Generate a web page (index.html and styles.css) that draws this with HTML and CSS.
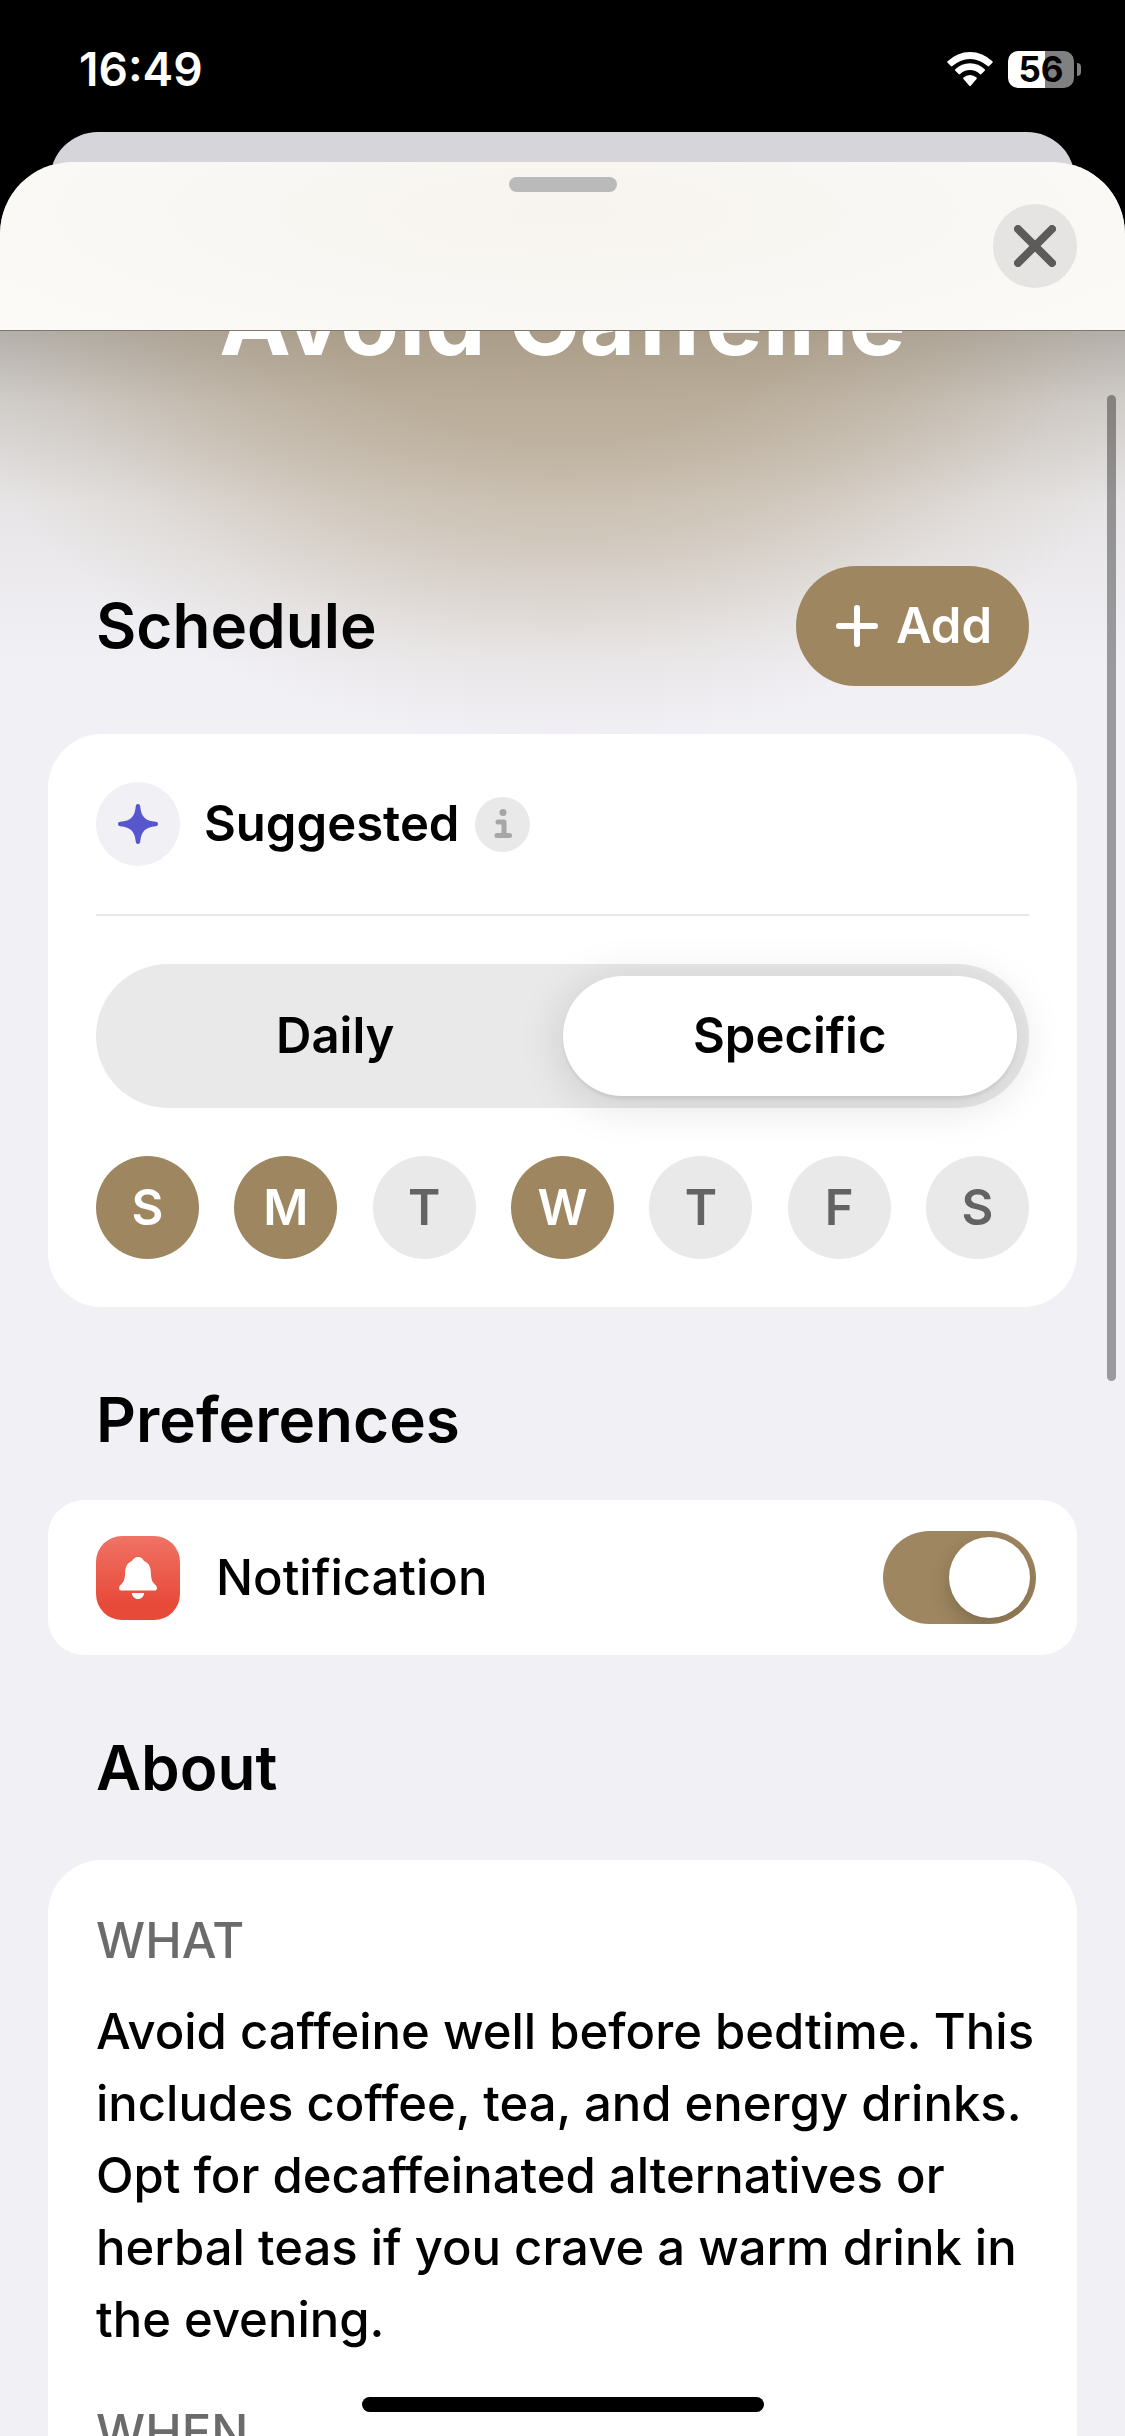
FILE: index.html
```
<!DOCTYPE html>
<html lang="en">
<head>
    <meta charset="UTF-8">
    <meta name="viewport" content="width=device-width, initial-scale=1">
    <title>Avoid Caffeine</title>
    <link rel="stylesheet" href="styles.css">
</head>
<body>

<div class="status-bar">
    <span class="time">16:49</span>
    <div class="status-icons">
        <svg class="wifi" viewBox="0 0 46 36" aria-hidden="true">
            <path d="M.6 10.2a32 32 0 0 1 44.8 0c.5.5.5 1 0 1.5l-3.3 3.4c-.5.5-1 .5-1.5 0a25.5 25.5 0 0 0-35.2 0c-.5.5-1 .5-1.5 0L.6 11.7c-.5-.5-.5-1 0-1.5z"/>
            <path d="M8.3 18.2a21 21 0 0 1 29.4 0c.5.5.5 1 0 1.5l-3.3 3.3c-.5.5-1 .5-1.5 0a14.5 14.5 0 0 0-19.8 0c-.5.5-1 .5-1.5 0l-3.3-3.3c-.5-.5-.5-1 0-1.5z"/>
            <path d="M16.5 26.5a9.5 9.5 0 0 1 13 0c.5.5.5 1 0 1.5l-5.700 6.800c-.5.5-1 .5-1.5 0L16.500 28c-.5-.5-.5-1 0-1.5z"/>
        </svg>
        <div class="battery">
            <span class="battery-level">56</span>
            <span class="battery-tip"></span>
        </div>
    </div>
</div>

<div class="back-card"></div>

<main class="sheet">
    <header class="sheet-header">
        <span class="grabber"></span>
        <button class="close" type="button" aria-label="Close">
            <svg viewBox="0 0 42 42" aria-hidden="true"><path d="M4 4l34 34M38 4L4 38"/></svg>
        </button>
    </header>

    <div class="scroll">
        <h1>Avoid Caffeine</h1>

        <div class="section-head">
            <h2>Schedule</h2>
            <button class="add" type="button">
                <svg viewBox="0 0 42 42" aria-hidden="true"><path d="M21 3v36M3 21h36"/></svg>
                Add
            </button>
        </div>

        <section class="card schedule">
            <div class="suggested">
                <span class="sparkle">
                    <svg viewBox="0 0 40 40" aria-hidden="true"><path d="M20 0c1.3 0 2 .8 2.2 2.2C23.2 12.5 27 16.800 37.800 17.800c1.400.2 2.200.9 2.200 2.200s-.8 2-2.200 2.200C27 23.200 23.200 27.500 22.200 37.800 22 39.200 21.300 40 20 40s-2-.8-2.200-2.200C16.800 27.500 13 23.200 2.200 22.200.8 22 0 21.300 0 20s.8-2 2.200-2.200C13 16.800 16.800 12.500 17.800 2.200 18 .8 18.700 0 20 0z"/></svg>
                </span>
                <span class="label">Suggested</span>
                <button class="info" type="button" aria-label="Info">
                    <svg viewBox="0 0 18 30" aria-hidden="true"><circle cx="9" cy="3.5" r="3.5"/><path d="M4 13h6v13M3 26.500h12.500"/></svg>
                </button>
            </div>

            <div class="segment">
                <label><input type="radio" name="repeat" value="daily"><span>Daily</span></label>
                <label><input type="radio" name="repeat" value="specific" checked><span>Specific</span></label>
            </div>

            <div class="days">
                <label><input type="checkbox" name="sun" checked><span>S</span></label>
                <label><input type="checkbox" name="mon" checked><span>M</span></label>
                <label><input type="checkbox" name="tue"><span>T</span></label>
                <label><input type="checkbox" name="wed" checked><span>W</span></label>
                <label><input type="checkbox" name="thu"><span>T</span></label>
                <label><input type="checkbox" name="fri"><span>F</span></label>
                <label><input type="checkbox" name="sat"><span>S</span></label>
            </div>
        </section>

        <div class="section-head">
            <h2>Preferences</h2>
        </div>

        <section class="card preference">
            <span class="bell">
                <svg viewBox="0 0 38 42" aria-hidden="true"><path d="M19 0c3 0 5 1.7 6 4 4.5 1.800 6.500 5.500 6.800 10.500.3 6.500.7 9.500 3.700 12.500 1.500 1.500 2.500 2.700 2.500 4.200 0 1.500-1.200 2.300-2.800 2.300H2.800C1.200 33.500 0 32.700 0 31.200c0-1.500 1-2.700 2.500-4.200 3-3 3.400-6 3.700-12.500C6.500 9.500 8.500 5.800 13 4c1-2.300 3-4 6-4zM12.800 36h12.400c-.4 3.500-2.900 6-6.200 6s-5.800-2.500-6.200-6z"/></svg>
            </span>
            <label for="notification">Notification</label>
            <input class="switch" type="checkbox" id="notification" checked>
        </section>

        <div class="section-head">
            <h2>About</h2>
        </div>

        <section class="card about">
            <h3>WHAT</h3>
            <p>Avoid caffeine well before bedtime. This includes coffee, tea, and energy drinks. Opt for decaffeinated alternatives or herbal teas if you crave a warm drink in the evening.</p>
            <h3>WHEN</h3>
        </section>
    </div>

    <span class="scrollbar"></span>
    <span class="home-indicator"></span>
</main>

</body>
</html>
```

FILE: styles.css
```
* {
    box-sizing: border-box;
}
body {
    margin: 0;
    height: 100vh;
    display: flex;
    flex-direction: column;
    overflow: hidden;
    background-color: #000;
    color: #000;
    font-family: Inter, "Liberation Sans", sans-serif;
    font-size: 49px;
    line-height: 72px;
}
h1, h2, h3, p {
    margin: 0;
}
svg {
    display: block;
}
button {
    border: none;
    padding: 0;
    font: inherit;
    display: flex;
    align-items: center;
    justify-content: center;
}

/* status bar */
.status-bar {
    height: 132px;
    padding: 6px 44px 0 79px;
    display: flex;
    align-items: center;
    justify-content: space-between;
    flex-shrink: 0;
    color: #fff;
}
.time {
    font-size: 46px;
    font-weight: 600;
}
.status-icons {
    display: flex;
    align-items: center;
    gap: 15px;
}
.wifi {
    width: 46px;
    height: 36px;
    fill: #fff;
}
.battery {
    display: flex;
    align-items: center;
    gap: 3px;
}
.battery-level {
    width: 66px;
    height: 37px;
    border-radius: 10px;
    background: linear-gradient(90deg, #fff 56%, #808080 56%);
    color: #000;
    font-size: 35px;
    font-weight: 700;
    line-height: 37px;
    text-align: center;
}
.battery-tip {
    width: 4px;
    height: 13px;
    border-radius: 0 4px 4px 0;
    background-color: #808080;
}

/* sheet */
.back-card {
    height: 102px;
    margin: 0 50px -72px;
    border-radius: 48px 48px 0 0;
    background-color: #d6d5da;
    flex-shrink: 0;
}
.sheet {
    position: relative;
    flex: 1;
    min-height: 0;
    overflow: hidden;
    border-radius: 72px 72px 0 0;
    background-color: #f1f0f5;
}
.sheet-header {
    position: absolute;
    z-index: 1;
    top: 0;
    left: 0;
    right: 0;
    height: 169px;
    padding: 0 48px;
    border-bottom: 1px solid #7d776c;
    background: radial-gradient(ellipse 60% 100% at 50% 30%, #f7f4ef, #fbfaf7);
    display: flex;
    align-items: center;
    justify-content: flex-end;
}
.grabber {
    position: absolute;
    top: 15px;
    left: calc(50% - 54px);
    width: 108px;
    height: 15px;
    border-radius: 8px;
    background-color: #bababa;
}
.close {
    width: 84px;
    height: 84px;
    border-radius: 50%;
    background-color: #e5e4e2;
}
.close svg {
    width: 42px;
    height: 42px;
    fill: none;
    stroke: #5c5b5a;
    stroke-width: 8;
    stroke-linecap: round;
}
.scroll {
    padding: 98px 48px 0;
    background:
        radial-gradient(ellipse 58% 500px at 50% 80px, rgba(158,134,96,0.52), rgba(158,134,96,0.47) 40%, rgba(158,134,96,0.32) 60%, rgba(158,134,96,0.1) 83%, rgba(158,134,96,0)),
        linear-gradient(180deg, #b5b2af 168px, #d3d0ce 240px, #e7e5e6 340px, #f1f0f5 500px);
}
h1 {
    color: #fff;
    font-size: 96px;
    font-weight: 700;
    line-height: 120px;
    text-align: center;
}
.section-head {
    display: flex;
    align-items: center;
    justify-content: space-between;
    padding: 0 48px;
}
h2 {
    font-size: 62px;
    font-weight: 600;
}
h1 + .section-head {
    margin: 186px 0 48px;
}
.add {
    height: 120px;
    padding: 0 37px 0 40px;
    gap: 18px;
    border-radius: 60px;
    background-color: #9e8660;
    color: #fff;
    font-weight: 600;
}
.add svg {
    width: 42px;
    height: 42px;
    fill: none;
    stroke: #fff;
    stroke-width: 6;
    stroke-linecap: round;
}

/* cards */
.card {
    border-radius: 54px;
    background-color: #fff;
}
.schedule {
    padding: 48px;
    margin-bottom: 77px;
}
.suggested {
    display: flex;
    align-items: center;
    padding-bottom: 48px;
    border-bottom: 2px solid #e8e8e8;
}
.sparkle {
    width: 84px;
    height: 84px;
    border-radius: 50%;
    background-color: #f1f0f5;
    display: flex;
    align-items: center;
    justify-content: center;
}
.sparkle svg {
    width: 40px;
    height: 40px;
    fill: #5756ce;
}
.label {
    margin: 0 16px 0 24px;
    font-weight: 600;
}
.info {
    width: 55px;
    height: 55px;
    border-radius: 50%;
    background-color: #e9e9e9;
}
.info svg {
    width: 18px;
    height: 30px;
    fill: #a6a6a6;
}
.info path {
    fill: none;
    stroke: #a6a6a6;
    stroke-width: 5;
    stroke-linecap: round;
    stroke-linejoin: round;
}
.segment {
    display: flex;
    margin: 48px 0;
    padding: 12px;
    border-radius: 72px;
    background-color: #e9e9e9;
    font-weight: 600;
}
.segment label {
    flex: 1;
}
.segment input, .days input {
    position: absolute;
    opacity: 0;
}
.segment span {
    display: block;
    line-height: 120px;
    border-radius: 60px;
    text-align: center;
}
.segment input:checked + span {
    background-color: #fff;
    box-shadow: 0 3px 3px rgba(0,0,0,0.06), 0 6px 48px rgba(0,0,0,0.14);
}
.days {
    position: relative;
    display: flex;
    justify-content: space-between;
}
.days span {
    display: block;
    width: 103px;
    line-height: 103px;
    border-radius: 50%;
    background-color: #e9e9e9;
    color: #636363;
    font-weight: 600;
    text-align: center;
}
.days input:checked + span {
    background-color: #9e8660;
    color: #fff;
}
.preference {
    display: flex;
    align-items: center;
    margin: 44px 0 77px;
    padding: 31px 41px 31px 48px;
    border-radius: 36px;
}
.bell {
    width: 84px;
    height: 84px;
    margin-right: 36px;
    border-radius: 26px;
    background: linear-gradient(180deg, #f07366, #e84a39 80%);
    display: flex;
    align-items: center;
    justify-content: center;
}
.bell svg {
    width: 38px;
    height: 42px;
    fill: #fff;
}
.preference label {
    flex: 1;
    font-weight: 500;
}
.switch {
    appearance: none;
    width: 153px;
    height: 93px;
    margin: 0;
    border-radius: 47px;
    background-color: #d8d8da;
    overflow: hidden;
}
.switch::before {
    content: "";
    display: block;
    width: 81px;
    height: 81px;
    margin: 6px;
    border-radius: 50%;
    background-color: #fff;
    box-shadow: 0 8px 20px rgba(0,0,0,0.2);
}
.switch:checked {
    background-color: #9e8660;
}
.switch:checked::before {
    margin-left: 66px;
}
.about {
    margin-top: 56px;
    padding: 45px 40px 48px 48px;
}
h3 {
    color: #6b6b6b;
    font-size: 49px;
    font-weight: 500;
}
.about p {
    margin: 19px 0 41px;
    font-weight: 500;
}

/* overlays */
.scrollbar {
    position: absolute;
    top: 233px;
    right: 9px;
    width: 9px;
    height: 986px;
    border-radius: 5px;
    background-color: rgba(0,0,0,0.36);
}
.home-indicator {
    position: absolute;
    bottom: 24px;
    left: calc(50% - 201px);
    width: 402px;
    height: 15px;
    border-radius: 8px;
    background-color: #000;
}
```
